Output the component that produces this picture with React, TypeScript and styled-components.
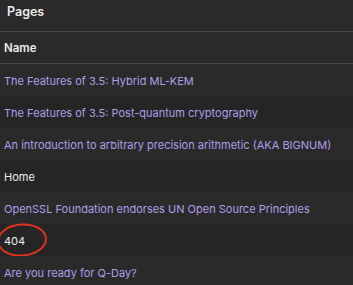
import React from "react";
import styled, { createGlobalStyle } from "styled-components";

const Global = createGlobalStyle`
  html, body { margin: 0; padding: 0; background: #2a2a2a; }
  body { font-family: Inter, "Noto Sans", sans-serif; -webkit-font-smoothing: antialiased; }
`;

const Panel = styled.div`
  width: 353px;
  height: 285px;
  overflow: hidden;
  background: #2a2a2a;
  color: #e8e8e8;
`;

const Title = styled.div`
  height: 32px;
  box-sizing: border-box;
  padding: 4px 7px 0;
  font-size: 12.5px;
  line-height: 16px;
  font-weight: 600;
  color: #ececec;
  border-bottom: 1px solid #474747;
`;

const Table = styled.div`
  display: flex;
  flex-direction: column;
`;

const HeadRow = styled.div`
  height: 32px;
  box-sizing: border-box;
  padding: 1px 4px 0;
  display: flex;
  align-items: center;
  font-size: 11.5px;
  font-weight: 600;
  color: #ececec;
  border-bottom: 1px solid #474747;
`;

const Row = styled.div<{ $alt: boolean }>`
  position: relative;
  height: 32px;
  padding: 1px 4px 0;
  box-sizing: border-box;
  display: flex;
  align-items: center;
  background: ${(p) => (p.$alt ? "#252525" : "#2a2a2a")};
`;

const Cell = styled.span<{ $link: boolean }>`
  font-size: 11px;
  color: ${(p) => (p.$link ? "#ad9fe6" : "#ececec")};
  white-space: nowrap;
`;

const Circle = styled.svg`
  position: absolute;
  left: -4px;
  top: -3px;
  width: 54px;
  height: 38px;
  pointer-events: none;
`;

const rows = [
  { name: "The Features of 3.5: Hybrid ML-KEM", link: true },
  { name: "The Features of 3.5: Post-quantum cryptography", link: true },
  { name: "An introduction to arbitrary precision arithmetic (AKA BIGNUM)", link: true },
  { name: "Home", link: false },
  { name: "OpenSSL Foundation endorses UN Open Source Principles", link: true },
  { name: "404", link: false, marked: true },
  { name: "Are you ready for Q-Day?", link: true },
];

export default function App() {
  return (
    <>
      <Global />
      <Panel>
        <Title>Pages</Title>
        <Table>
          <HeadRow>Name</HeadRow>
          {rows.map((r, i) => (
            <Row key={r.name} $alt={i % 2 === 1}>
              <Cell $link={r.link}>{r.name}</Cell>
              {r.marked && (
                <Circle viewBox="0 0 54 38">
                  <ellipse
                    cx="26"
                    cy="19"
                    rx="24"
                    ry="15.5"
                    fill="none"
                    stroke="#e3301f"
                    strokeWidth="2"
                    transform="rotate(-4 26 19)"
                  />
                </Circle>
              )}
            </Row>
          ))}
        </Table>
      </Panel>
    </>
  );
}
